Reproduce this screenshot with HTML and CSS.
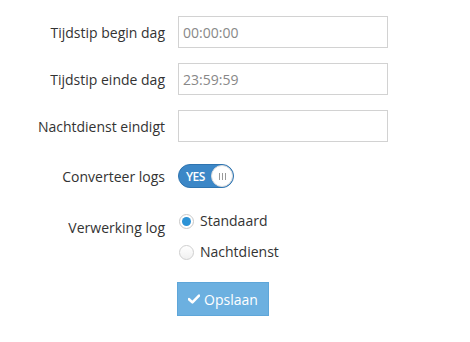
FILE: index.html
```html
<!DOCTYPE html>
<html>
<head>
<meta charset="utf-8">
<link rel="stylesheet" href="styles.css">
</head>
<body>
<form class="form">
  <div class="row">
    <label class="label">Tijdstip begin dag</label>
    <input class="input" type="text" placeholder="00:00:00">
  </div>
  <div class="row">
    <label class="label">Tijdstip einde dag</label>
    <input class="input" type="text" placeholder="23:59:59">
  </div>
  <div class="row">
    <label class="label">Nachtdienst eindigt</label>
    <input class="input" type="text">
  </div>
  <div class="row row-center">
    <label class="label">Converteer logs</label>
    <div class="switch">
      <span class="switch-text">YES</span>
      <span class="knob"><span class="bar"></span><span class="bar"></span><span class="bar"></span></span>
    </div>
  </div>
  <div class="row row-top">
    <label class="label label-radio">Verwerking log</label>
    <div class="radios">
      <div class="radio"><span class="dot dot-on"></span><span>Standaard</span></div>
      <div class="radio"><span class="dot"></span><span>Nachtdienst</span></div>
    </div>
  </div>
  <div class="row row-btn">
    <span class="label"></span>
    <button class="btn" type="button">
      <svg class="check" viewBox="0 0 12 10" width="12" height="10"><path d="M1 5.2 L4.4 8.4 L11 1.6" fill="none" stroke="#fff" stroke-width="2.6" stroke-linecap="round" stroke-linejoin="round"/></svg>
      <span>Opslaan</span>
    </button>
  </div>
</form>
</body>
</html>
```
FILE: styles.css
```css
html, body {
  margin: 0;
  padding: 0;
  background: #fff;
}
body {
  font-family: "Open Sans", "Liberation Sans", sans-serif;
  font-size: 14px;
  color: #333;
}
.form {
  padding-top: 16px;
  display: flex;
  flex-direction: column;
  gap: 15px;
}
.row {
  display: flex;
  align-items: center;
  gap: 13px;
}
.label-row { padding-top: 1px; }
.row-center {
  height: 32px;
  margin-top: 3px;
}
.row-top {
  align-items: flex-start;
  margin-top: -3px;
}
.label {
  width: 165px;
  text-align: right;
  line-height: 20px;
  flex: none;
  padding-top: 1px;
}
.label-radio { padding-top: 14px; }
.input {
  box-sizing: border-box;
  width: 210px;
  height: 32px;
  border: 1px solid #d2d2d2;
  padding: 0 4px;
  font-family: "Open Sans", "Liberation Sans", sans-serif;
  font-size: 14px;
  color: #555;
  outline: none;
  margin: 0;
}
.input::placeholder { color: #888; opacity: 1; }
.switch {
  box-sizing: border-box;
  width: 56px;
  height: 24px;
  border-radius: 12px;
  background: #3c87c7;
  border: 1px solid #2f74b0;
  display: flex;
  align-items: center;
  justify-content: space-between;
  padding: 0 0 0 7px;
}
.switch-text {
  color: #fff;
  font-size: 12px;
  font-weight: 600;
  letter-spacing: -0.5px;
}
.knob {
  box-sizing: border-box;
  width: 22px;
  height: 22px;
  border-radius: 50%;
  background: #fff;
  border: 1px solid #dcdcdc;
  display: flex;
  align-items: center;
  justify-content: center;
  gap: 2px;
}
.bar {
  width: 1px;
  height: 7px;
  background: #999;
}
.radios {
  padding-top: 7px;
  display: flex;
  flex-direction: column;
  gap: 11px;
}
.radio {
  display: flex;
  align-items: center;
  gap: 6px;
  line-height: 20px;
  margin-left: 1px;
}
.dot {
  box-sizing: border-box;
  width: 15px;
  height: 15px;
  border-radius: 50%;
  border: 1px solid #cfcfcf;
  background: linear-gradient(#fff, #f0f0f0);
  flex: none;
  position: relative;
}
.dot-on {
  background: #fff;
  border-color: #c8c8c8;
}
.dot-on::after {
  content: "";
  position: absolute;
  left: 2px;
  top: 2px;
  width: 9px;
  height: 9px;
  border-radius: 50%;
  background: #2d93d6;
}
.row-btn { margin-top: 5px; gap: 12px; }
.btn {
  height: 34px;
  width: 92px;
  background: #6cb0e0;
  border: 1px solid #5ea6d9;
  color: #fff;
  font-family: "Open Sans", "Liberation Sans", sans-serif;
  font-size: 14px;
  display: flex;
  align-items: center;
  justify-content: center;
  gap: 4px;
  padding: 0;
  border-radius: 0;
}
.check { display: block; }
```
